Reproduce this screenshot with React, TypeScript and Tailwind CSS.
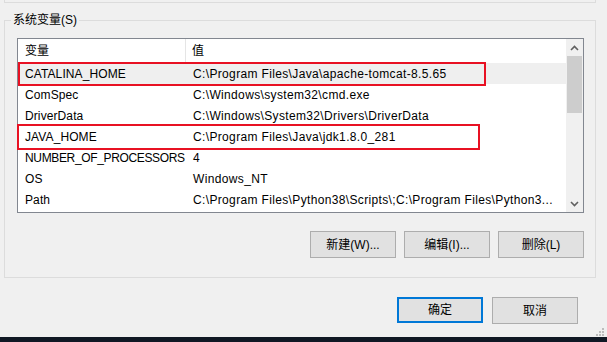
const rows = [
  ["CATALINA_HOME", "C:\\Program Files\\Java\\apache-tomcat-8.5.65"],
  ["ComSpec", "C:\\Windows\\system32\\cmd.exe"],
  ["DriverData", "C:\\Windows\\System32\\Drivers\\DriverData"],
  ["JAVA_HOME", "C:\\Program Files\\Java\\jdk1.8.0_281"],
  ["NUMBER_OF_PROCESSORS", "4"],
  ["OS", "Windows_NT"],
  ["Path", "C:\\Program Files\\Python38\\Scripts\\;C:\\Program Files\\Python3..."],
];

function Button({ label, primary }: { label: string; primary?: boolean }) {
  return (
    <div
      className={
        "w-[86px] flex items-center justify-center bg-[#e1e1e1] text-black " +
        (primary ? "h-[26px] border-2 border-[#0078d7]" : "h-[27px] border border-[#adadad]")
      }
    >
      {label}
    </div>
  );
}

function Chevron({ up }: { up?: boolean }) {
  return (
    <svg width="9" height="6" viewBox="0 0 9 6">
      <path
        d={up ? "M1 5 L4.5 1.5 L8 5" : "M1 1 L4.5 4.5 L8 1"}
        fill="none"
        stroke="#606060"
        strokeWidth="1.6"
      />
    </svg>
  );
}

export default function App() {
  return (
    <div
      className="w-[607px] h-[342px] bg-[#f0f0f0] flex flex-col text-[12px] text-black overflow-hidden"
      style={{ fontFamily: '"Liberation Sans", "Noto Sans CJK SC", sans-serif' }}
    >
      {/* bottom edge of the group above */}
      <div className="ml-[4px] w-[592px] h-[3px] border-x border-b border-[#dcdcdc]" />

      <fieldset className="ml-[4px] mt-[9px] w-[592px] border border-[#dcdcdc] pb-[19px]">
        <legend className="ml-[6px] px-[2px] leading-[16px]">系统变量(S)</legend>

        <div className="relative ml-[12px] mt-[10px] w-[567px] h-[175px] border border-[#828790] bg-white flex">
          <div className="flex-1 flex flex-col">
            <div className="h-[24px] flex items-center">
              <div className="w-[168px] h-full pl-[7px] flex items-center border-r border-[#e5e5e5]">变量</div>
              <div className="pl-[6px]">值</div>
            </div>
            {rows.map(([name, value], i) => (
              <div
                key={name}
                className={"h-[21px] flex items-center whitespace-nowrap " + (i === 0 ? "bg-[#efefef]" : "")}
              >
                <div
                  className={
                    "w-[168px] pl-[7px] overflow-hidden " +
                    (name.length > 15 ? "tracking-[-0.35px]" : "tracking-[0.1px]")
                  }
                >
                  {name}
                </div>
                <div className="pl-[7px] tracking-[0.35px]">{value}</div>
              </div>
            ))}
          </div>

          <div className="w-[17px] bg-[#f0f0f0] flex flex-col">
            <div className="h-[17px] flex items-center justify-center">
              <Chevron up />
            </div>
            <div className="h-[57px] mx-[1px] bg-[#cdcdcd]" />
            <div className="flex-1" />
            <div className="h-[17px] flex items-center justify-center">
              <Chevron />
            </div>
          </div>

          {/* red highlight annotations */}
          <div className="absolute left-0 top-[23px] w-[468px] h-[24px] border-2 border-[#e81123]" />
          <div className="absolute left-[-1px] top-[85px] w-[463px] h-[26px] border-2 border-[#e81123]" />
        </div>

        <div className="mt-[18px] mr-[11px] flex justify-end gap-[8px]">
          <Button label="新建(W)..." />
          <Button label="编辑(I)..." />
          <Button label="删除(L)" />
        </div>
      </fieldset>

      <div className="mt-[19px] flex items-start justify-end">
        <div className="flex gap-[9px]">
          <Button label="确定" primary />
          <Button label="取消" />
        </div>
        <div className="ml-[18px] mr-[2px] mt-[31px]">
          <svg width="9" height="9" viewBox="0 0 9 9">
            <rect x="6" y="0" width="2" height="2" fill="#bcbcbc" />
            <rect x="3" y="3" width="2" height="2" fill="#bcbcbc" />
            <rect x="6" y="3" width="2" height="2" fill="#bcbcbc" />
            <rect x="0" y="6" width="2" height="2" fill="#bcbcbc" />
            <rect x="3" y="6" width="2" height="2" fill="#bcbcbc" />
            <rect x="6" y="6" width="2" height="2" fill="#bcbcbc" />
          </svg>
        </div>
      </div>

      <div className="mt-auto h-[5px] bg-[#101824]" />
    </div>
  );
}
